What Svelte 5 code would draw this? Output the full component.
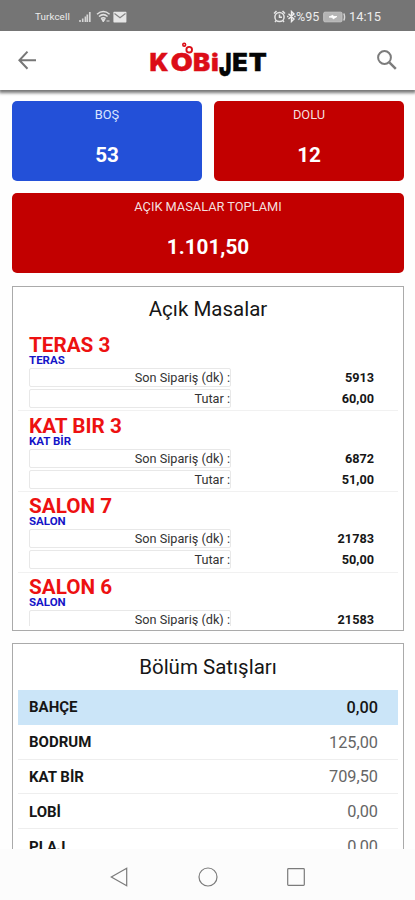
<script>
  const tables = [
    { name: 'TERAS 3', area: 'TERAS', minutes: '5913', amount: '60,00' },
    { name: 'KAT BIR 3', area: 'KAT BİR', minutes: '6872', amount: '51,00' },
    { name: 'SALON 7', area: 'SALON', minutes: '21783', amount: '50,00' },
    { name: 'SALON 6', area: 'SALON', minutes: '21583' }
  ];
  const sales = [
    { name: 'BAHÇE', amount: '0,00' },
    { name: 'BODRUM', amount: '125,00' },
    { name: 'KAT BİR', amount: '709,50' },
    { name: 'LOBİ', amount: '0,00' },
    { name: 'PLAJ', amount: '0,00' }
  ];
</script>

<div class="phone">
  <div class="status">
    <span class="carrier">Turkcell</span>
    <svg class="signal" width="12" height="12" viewBox="0 0 12 12">
      <path d="M1 9v2M3.7 7.5V11M6.4 5.5V11" stroke="#d5d5d5" stroke-width="1.6" />
      <path d="M8.3 3.5V11M10.8 1V11" stroke="#d5d5d5" stroke-width="1.7" />
    </svg>
    <svg class="wifi" width="15" height="13" viewBox="0 0 15 13" fill="none" stroke="#e0e0e0">
      <path d="M1 4.2Q7.3-1.2 13.6 4.2M3 6.5Q7.3 2.8 11.6 6.5M5 8.7Q7.3 6.8 9.6 8.7" stroke-width="1.5" />
      <path d="M5.700 9.300h3.200L7.300 12zM10.500 11h3" fill="#e0e0e0" stroke-width="1" />
    </svg>
    <svg class="mail" width="14" height="12" viewBox="0 0 14 12">
      <rect x=".4" y=".8" width="13" height="10.6" rx=".6" fill="#e6e6e6" />
      <path d="M1.500 2.500L7 6.800l5.500-4.300" fill="none" stroke="#858585" stroke-width="1.2" />
    </svg>
    <div class="spacer"></div>
    <svg class="alarm" width="13" height="13" viewBox="0 0 13 13" fill="none" stroke="#e5e5e5" stroke-width="1.500">
      <circle cx="6.500" cy="7" r="4.600" />
      <path d="M1 3.500L3.500 1M12 3.500L9.500 1M6.500 4.500V7.300H9M3.200 10.500L2 12M9.800 10.500L11 12" />
    </svg>
    <svg class="bt" width="9" height="13" viewBox="0 0 9 13" fill="none" stroke="#eee" stroke-width="1.400">
      <path d="M1.500 3.800L7 9 4.500 11.500V1.500L7 4 1.500 9M.1 6.500h1.400M7.200 6.500h1.400" />
    </svg>
    <span class="pct">%95</span>
    <svg class="battery" width="23" height="12" viewBox="0 0 23 12">
      <rect x=".7" y="1.200" width="18.300" height="9.600" rx="1.200" fill="#b4b4b4" stroke="#c4c4c4" />
      <path d="M20.800 2.500Q22.300 6 20.800 9.500" stroke="#d8d8d8" stroke-width="1.500" fill="none" />
      <path d="M6 6L10 4.200V5.500H14L10 8V6.500z" fill="#fff" stroke="#fff" stroke-width=".8" />
    </svg>
    <span class="clock">14:15</span>
  </div>

  <header>
    <svg class="back" width="20" height="20" viewBox="0 0 20 20" fill="none" stroke="#777" stroke-width="2">
      <path d="M10.500 1.600L2.400 10.200 10.500 18.800M2.400 10.200H19" />
    </svg>
    <svg class="logo" width="124" height="42" viewBox="0 0 124 42" role="img" aria-label="KOBİJET">
      <g fill="#dc0d17" stroke="#dc0d17">
        <text x="4.500" y="31" textLength="19" lengthAdjust="spacingAndGlyphs">K</text>
        <text x="25.700" y="31" textLength="22" lengthAdjust="spacingAndGlyphs">O</text>
        <text x="48" y="31" textLength="17.200" lengthAdjust="spacingAndGlyphs">B</text>
        <text x="66" y="31" textLength="7.800" lengthAdjust="spacingAndGlyphs">i</text>
      </g>
      <g fill="#050505" stroke="#050505">
        <text class="tall" x="73.900" y="36.300" textLength="12.500" lengthAdjust="spacingAndGlyphs">J</text>
        <text x="87.200" y="31" textLength="15.500" lengthAdjust="spacingAndGlyphs">E</text>
        <text x="103.800" y="31" textLength="18" lengthAdjust="spacingAndGlyphs">T</text>
      </g>
      <g fill="none" stroke="#dc0d17">
        <circle cx="44.200" cy="9.700" r="2.800" stroke-width="1.900" />
        <circle cx="39.200" cy="4.700" r="1.400" stroke-width="1.600" />
      </g>
    </svg>
    <svg class="search" width="22" height="22" viewBox="0 0 22 22" fill="none" stroke="#7c7c7c">
      <circle cx="8.500" cy="8.500" r="6.400" stroke-width="2" />
      <path d="M13.300 13.300L19.800 19.800" stroke-width="2.500" />
    </svg>
  </header>

  <main>
    <div class="cards">
      <div class="card blue"><span class="label">BOŞ</span><strong>53</strong></div>
      <div class="card"><span class="label">DOLU</span><strong>12</strong></div>
    </div>
    <div class="card total"><span class="label">AÇIK MASALAR TOPLAMI</span><strong>1.101,50</strong></div>

    <section class="panel open">
      <h2>Açık Masalar</h2>
      <div class="list">
        {#each tables as t}
          <article>
            <h3>{t.name}</h3>
            <div class="area">{t.area}</div>
            <div class="row"><span class="key">Son Sipariş (dk) :</span><b>{t.minutes}</b></div>
            {#if t.amount}
              <div class="row"><span class="key">Tutar :</span><b>{t.amount}</b></div>
            {/if}
          </article>
        {/each}
      </div>
    </section>

    <section class="panel sales">
      <h2>Bölüm Satışları</h2>
      {#each sales as s, i}
        <div class="sale" class:selected={i === 0}><b>{s.name}</b><span>{s.amount}</span></div>
      {/each}
    </section>
  </main>

  <nav>
    <svg width="20" height="20" viewBox="0 0 20 20"><path d="M16.700 1.200V18.800L1.300 10z" /></svg>
    <svg width="20" height="20" viewBox="0 0 20 20"><circle cx="10" cy="10" r="9" /></svg>
    <svg width="20" height="20" viewBox="0 0 20 20"><rect x="1.700" y="1.700" width="16.600" height="16.600" rx=".8" /></svg>
  </nav>
</div>

<style>
  :global(body) { background: #fff; }
  .phone {
    width: 415px;
    height: 900px;
    display: flex;
    flex-direction: column;
    overflow: hidden;
    background: #fefefe;
    font-family: Roboto, "Liberation Sans", sans-serif;
    color: #161616;
  }
  svg { display: block; flex: none; }
  .status {
    flex: none;
    height: 31px;
    box-sizing: border-box;
    padding: 2px 32px 0 35px;
    display: flex;
    align-items: center;
    background: #757575;
    color: #ececec;
  }
  .carrier { width: 44px; font-size: 9.800px; letter-spacing: .1px; }
  .wifi { margin-left: 5px; }
  .mail { margin-left: 2px; }
  .spacer { flex: 1; }
  .bt { margin-left: 1px; }
  .pct { font-size: 12.500px; width: 25px; }
  .battery { margin-left: 2px; }
  .clock { width: 34px; margin-left: 3px; font-size: 12.800px; }
  header {
    flex: none;
    height: 59px;
    box-sizing: border-box;
    padding: 0 17px;
    display: flex;
    justify-content: space-between;
    align-items: flex-start;
    background: #fff;
    box-shadow: 0 2px 3px 1px #777;
    z-index: 1;
  }
  .back { margin-top: 19px; }
  .logo { margin-top: 9px; }
  .search { margin-top: 18px; }
  .logo text { font: 900 24px Inter, Roboto, sans-serif; stroke-width: .4px; }
  .logo .tall { font-size: 31px; }
  main {
    flex: none;
    height: 759px;
    box-sizing: border-box;
    padding: 11px 11px 0 12px;
    overflow: hidden;
    display: flex;
    flex-direction: column;
  }
  .cards { flex: none; display: flex; gap: 12px; }
  .card {
    flex: 1;
    height: 80px;
    box-sizing: border-box;
    padding-top: 6px;
    border-radius: 5px;
    background: #c20000;
    color: #fff;
    display: flex;
    flex-direction: column;
    align-items: center;
  }
  .blue { background: #2350d8; }
  .total { flex: none; margin-top: 12px; }
  .label { font-size: 12.800px; line-height: 16px; color: #f4dfdf; }
  .blue .label { color: #dce5ff; }
  .card strong { margin-top: 19px; font-size: 20.700px; line-height: 26px; }
  .panel {
    flex: none;
    box-sizing: border-box;
    border: 1px solid #aaa;
    background: #fff;
    overflow: hidden;
  }
  .open { height: 345px; margin-top: 13px; padding-bottom: 4px; display: flex; flex-direction: column; }
  h2 { margin: 0; font-size: 20.500px; line-height: 24px; font-weight: 400; text-align: center; }
  .open h2 { padding-top: 10px; flex: none; }
  .list { flex: 1; overflow: hidden; padding-top: 9.500px; }
  article {
    height: 80.700px;
    box-sizing: border-box;
    margin: 0 5px;
    padding: 4.500px 24px 0 11px;
    border-bottom: 1px solid #f1f1f1;
  }
  h3 { margin: 0; font-size: 20.700px; line-height: 20px; color: #ed1111; }
  .area { font-size: 11.500px; line-height: 11px; font-weight: 700; color: #1414c8; }
  .row { height: 19px; margin-top: 2px; display: flex; justify-content: space-between; align-items: center; font-size: 12.700px; }
  .key {
    width: 202px;
    height: 19px;
    line-height: 17px;
    box-sizing: border-box;
    border: 1px solid #e8e8e8;
    border-radius: 2px;
    text-align: right;
    color: #333;
  }
  .sales { height: 240px; margin-top: 12px; }
  .sales h2 { padding: 11px 0; }
  .sale {
    height: 34.800px;
    box-sizing: border-box;
    margin: 0 5px;
    padding: 1px 20px 0 11px;
    border-bottom: 1px solid #eee;
    display: flex;
    justify-content: space-between;
    align-items: center;
    font-size: 15px;
  }
  .sale span { font-size: 16.300px; color: #666; }
  .selected { background: #cbe5f8; border-color: #cbe5f8; }
  .selected span { font-weight: 500; color: #161616; }
  nav {
    flex: 1;
    display: flex;
    justify-content: center;
    align-items: center;
    gap: 68px;
    padding-top: 4px;
    background: #fcfcfc;
  }
  nav svg { fill: none; stroke: #7b7b7b; stroke-width: 1.200; }
</style>
